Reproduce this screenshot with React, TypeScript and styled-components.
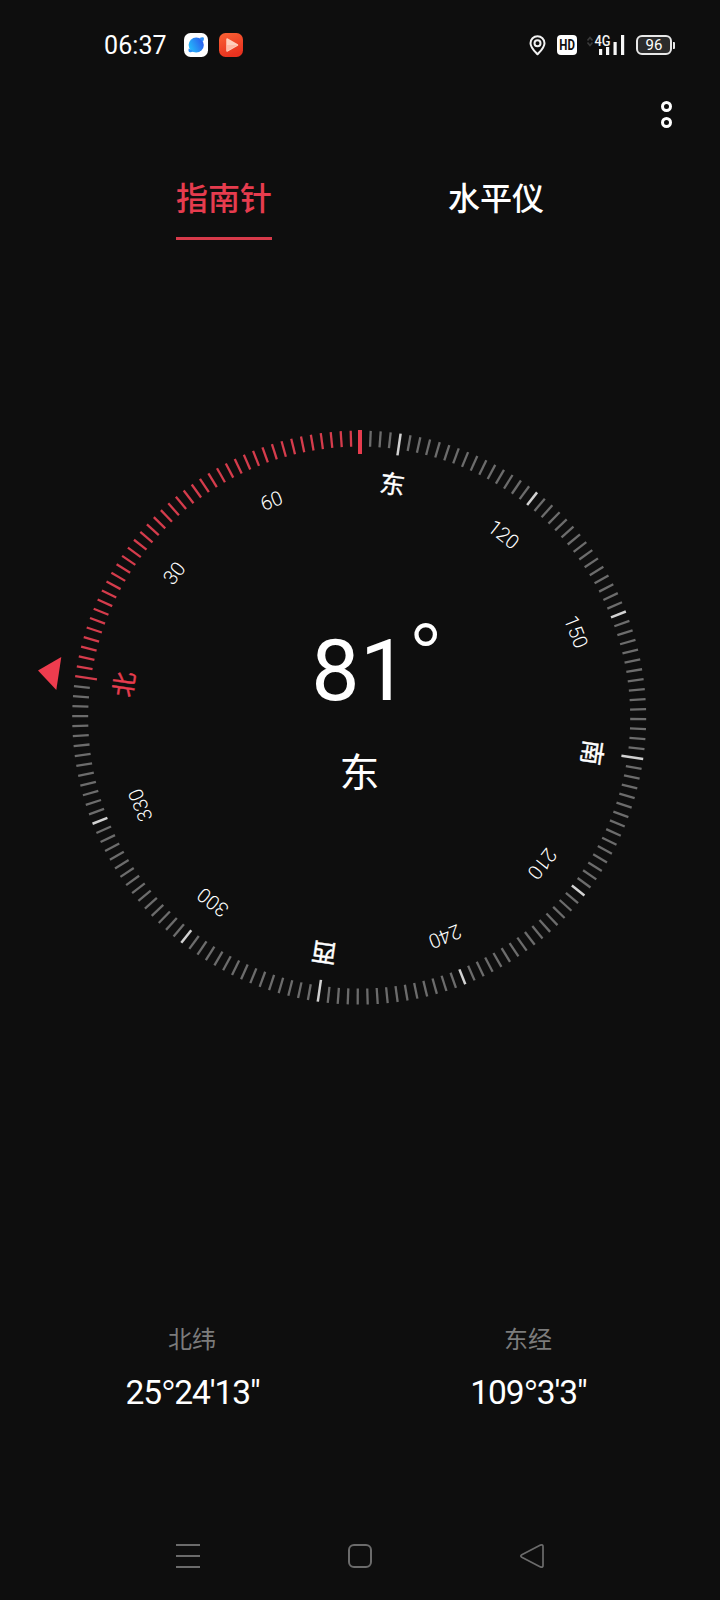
import React from "react";
import styled, { createGlobalStyle } from "styled-components";

const RED = "#e63c4e";
const DIGITS = `Roboto, "Noto Sans", "Noto Sans CJK SC", sans-serif`;
const HAN = `"Noto Sans CJK SC", "Noto Sans", sans-serif`;

const GlobalStyle = createGlobalStyle`
  * { box-sizing: border-box; }
  body { margin: 0; background: #0e0e0e; }
`;

const Screen = styled.main`
  width: 720px;
  height: 1600px;
  display: flex;
  flex-direction: column;
  background: #0e0e0e;
  color: #fff;
  font-family: ${DIGITS};
  overflow: hidden;
`;

const StatusBar = styled.header`
  height: 90px;
  flex: none;
  display: flex;
  align-items: center;
  padding: 0 45px 0 104px;
`;

const Clock = styled.time`
  width: 80px;
  padding-top: 1px;
  font-size: 25px;
  line-height: 30px;
  letter-spacing: 0.1px;
`;

const AppIcons = styled.div`
  display: flex;
  gap: 11px;
`;

const SystemIcons = styled.div`
  display: flex;
  align-items: center;
  margin-left: auto;
`;

const HdBadge = styled.svg.attrs({ width: 20, height: 20, viewBox: "0 0 20 20" })`
  margin: 0 9px 0 11px;
  overflow: visible;
  font-family: ${DIGITS};
  font-size: 14.5px;
  font-weight: 700;
`;

const Battery = styled.div`
  display: flex;
  align-items: center;
  margin-left: 11px;
`;

const BatteryBody = styled.span`
  width: 36px;
  height: 20px;
  border: 2px solid #e8e8e8;
  border-radius: 6px;
  background: #2b2b2b;
  display: flex;
  align-items: center;
  justify-content: center;
  font-size: 15px;
  line-height: 16px;
`;

const BatteryTip = styled.span`
  width: 2px;
  height: 7px;
  margin-left: 1px;
  background: #e8e8e8;
  border-radius: 0 1px 1px 0;
`;

const MenuRow = styled.div`
  height: 48px;
  display: flex;
  justify-content: flex-end;
  align-items: center;
  padding-right: 48.5px;
`;

const MenuButton = styled.button`
  border: 0;
  padding: 0;
  background: none;
  display: grid;
  gap: 5px;
`;

const Ring = styled.span`
  width: 11px;
  height: 11px;
  border: 3px solid #fff;
  border-radius: 50%;
`;

const Tabs = styled.nav`
  height: 102px;
  display: flex;
  justify-content: space-between;
  align-items: flex-end;
  padding: 0 176px;
`;

const Tab = styled.button<{ $active?: boolean }>`
  width: 96px;
  height: 70px;
  border: 0;
  border-bottom: 3px solid ${(p) => (p.$active ? "#d83a4a" : "transparent")};
  background: none;
  padding: 0 0 16px;
  font: 500 32px/48px ${HAN};
  white-space: nowrap;
  color: ${(p) => (p.$active ? RED : "#fff")};
`;

const Compass = styled.section`
  height: 640px;
  margin-top: 160px;
  display: grid;
  grid-template: 100% / 100%;
`;

const Dial = styled.svg`
  grid-area: 1 / 1;
  display: block;
`;

const Readout = styled.div`
  grid-area: 1 / 1;
  display: flex;
  flex-direction: column;
  align-items: center;
  padding-top: 221px;
`;

const Heading = styled.div`
  position: relative;
  font-size: 86px;
  line-height: 100px;
  letter-spacing: 0.5px;
`;

const DegreeSign = styled.span`
  position: absolute;
  left: 100%;
  top: -12px;
  font-size: 95px;
  font-weight: 300;
  margin-left: -1px;
`;

const Direction = styled.div`
  margin-top: 20px;
  padding-right: 1px;
  font: 400 40px/58px ${HAN};
`;

const Coordinates = styled.section`
  display: flex;
  margin-top: 280px;
  padding: 0 24px;
`;

const Coordinate = styled.div`
  flex: 1;
  display: flex;
  flex-direction: column;
  align-items: center;
`;

const CoordinateName = styled.span`
  font: 400 24px/36px ${HAN};
  color: #7c7c7c;
`;

const CoordinateValue = styled.span`
  margin-top: 17px;
  font-size: 33.5px;
  line-height: 40px;
  letter-spacing: -1.1px;
  padding-left: 1px;
`;

const CoordinateDegree = styled.span`
  font-size: 42px;
  font-weight: 300;
  line-height: 0;
  letter-spacing: -2px;
  margin-left: -0.5px;
  vertical-align: -6px;
`;

const NavigationBar = styled.footer`
  height: 88px;
  margin-top: auto;
  display: flex;
  justify-content: space-between;
  align-items: center;
  padding: 0 175px;
`;

const NavIcon = styled.svg.attrs({ width: 26, height: 26, viewBox: "0 0 26 26" })`
  fill: none;
  stroke: #6b6b6b;
  stroke-width: 2;
  stroke-linejoin: round;
`;

const NORTH = -81.7;
const HEADING = 82;
const CX = 359.2;
const CY = 317.6;
const LABEL_CX = 358.2;
const LABEL_CY = 318.5;
const CARDINALS: Record<number, string> = { 0: "北", 90: "东", 180: "南", 270: "西" };

function Ticks() {
  return (
    <>
      {Array.from({ length: 180 }, (_, i) => {
        const bearing = i * 2;
        const cardinal = bearing % 90 === 0;
        const major = bearing % 30 === 0;
        const travelled = bearing < HEADING;
        if (bearing === HEADING) return null;
        return (
          <line
            key={bearing}
            x1={CX}
            x2={CX}
            y1={CY - 287}
            y2={CY - (cardinal ? 265 : 271)}
            stroke={travelled ? "#d53c4c" : major ? "#d2d2d2" : "#6c6c6c"}
            strokeWidth={major && !travelled ? 2.5 : 2.3}
            transform={`rotate(${NORTH + bearing} ${CX} ${CY})`}
          />
        );
      })}
      <rect x={358} y={30} width={4} height={24} fill={RED} />
    </>
  );
}

function Labels() {
  return (
    <>
      {Array.from({ length: 12 }, (_, i) => {
        const bearing = i * 30;
        const name = CARDINALS[bearing];
        return (
          <text
            key={bearing}
            x={LABEL_CX}
            y={LABEL_CY - 227.5}
            textAnchor="middle"
            fontFamily={name ? HAN : DIGITS}
            fontSize={name ? 25 : 20}
            fontWeight={name ? 400 : 300}
            fill={bearing === 0 ? RED : "#fff"}
            stroke={name ? (bearing === 0 ? RED : "#fff") : "none"}
            strokeWidth={0.4}
            transform={`rotate(${NORTH + bearing} ${LABEL_CX} ${LABEL_CY})`}
          >
            {name ?? bearing}
          </text>
        );
      })}
    </>
  );
}

export default function App() {
  return (
    <Screen>
      <GlobalStyle />
      <StatusBar>
        <Clock>06:37</Clock>
        <AppIcons>
          <svg width="24" height="24" viewBox="0 0 24 24">
            <defs>
              <linearGradient id="planet" x1="0.1" y1="0.7" x2="0.9" y2="0.3">
                <stop offset="0" stopColor="#25b6fa" />
                <stop offset="1" stopColor="#2a62ee" />
              </linearGradient>
            </defs>
            <rect width="24" height="24" rx="6.5" fill="#fff" />
            <circle cx="12.2" cy="12" r="7.6" fill="url(#planet)" />
            <path d="M4.7 15.5c-.7 2.5 0 4.3 2.8 3.5l2.5-.8zM15.500 5c2.500-1 4.300-1 4.400.3.100 1-.3 2.300-1 3.500z" fill="#2c8df5" />
          </svg>
          <svg width="24" height="24" viewBox="0 0 24 24">
            <defs>
              <linearGradient id="player" x1="0" y1="0" x2="0.4" y2="1">
                <stop offset="0" stopColor="#fb6335" />
                <stop offset="1" stopColor="#e8321f" />
              </linearGradient>
            </defs>
            <rect width="24" height="24" rx="6.5" fill="url(#player)" />
            <path d="M8 6v12L18.500 12z" fill="#ffd0bd" stroke="#ffd0bd" strokeWidth="1.5" strokeLinejoin="round" />
            <path d="M8 12v6L18.500 12z" fill="#ffb9a5" />
          </svg>
        </AppIcons>
        <SystemIcons>
          <svg width="17" height="21" viewBox="0 0 17 21" fill="none" stroke="#f2f2f2">
            <path d="M8.500 19.300C6 16.500 1.500 12.700 1.500 8.200a7 7 0 0 1 14 0c0 4.500-4.500 8.300-7 11.100z" strokeWidth="2" strokeLinejoin="round" />
            <circle cx="8.5" cy="8.3" r="3" strokeWidth="2" />
          </svg>
          <HdBadge>
            <rect width="20" height="20" rx="4" fill="#fff" />
            <text x="2.3" y="15.2" fill="#0e0e0e" textLength="15.6" lengthAdjust="spacingAndGlyphs">HD</text>
          </HdBadge>
          <svg width="39" height="22" viewBox="0 0 39 22">
            <path d="M1.500 6.500l2.500-3 2.500 3M1.500 8.500l2.500 3 2.500-3" fill="none" stroke="#3a3a3a" strokeWidth="1.7" />
            <text x="8.5" y="11.5" fontFamily={DIGITS} fontSize="14.5" fontWeight="500" fill="#f2f2f2" textLength="16" lengthAdjust="spacingAndGlyphs">4G</text>
            <path d="M13 15h3.200v6H13zM20 13h3.200v8H20zM27.500 8h3.200v13h-3.200zM35 1h3.200v20H35z" fill="#f7f7f7" />
          </svg>
          <Battery>
            <BatteryBody>96</BatteryBody>
            <BatteryTip />
          </Battery>
        </SystemIcons>
      </StatusBar>

      <MenuRow>
        <MenuButton aria-label="更多">
          <Ring />
          <Ring />
        </MenuButton>
      </MenuRow>

      <Tabs>
        <Tab $active>指南针</Tab>
        <Tab>水平仪</Tab>
      </Tabs>

      <Compass>
        <Dial width="720" height="640" viewBox="0 0 720 640">
          <Ticks />
          <Labels />
          <path d="M38 270.500L61.300 257L56.300 290z" fill="#ee3c4e" />
        </Dial>
        <Readout>
          <Heading>
            81<DegreeSign>°</DegreeSign>
          </Heading>
          <Direction>东</Direction>
        </Readout>
      </Compass>

      <Coordinates>
        <Coordinate>
          <CoordinateName>北纬</CoordinateName>
          <CoordinateValue>
            25<CoordinateDegree>°</CoordinateDegree>24'13"
          </CoordinateValue>
        </Coordinate>
        <Coordinate>
          <CoordinateName>东经</CoordinateName>
          <CoordinateValue>
            109<CoordinateDegree>°</CoordinateDegree>3'3"
          </CoordinateValue>
        </Coordinate>
      </Coordinates>

      <NavigationBar>
        <NavIcon>
          <path d="M1 2h24M1 13h24M1 24h24" />
        </NavIcon>
        <NavIcon>
          <rect x="2" y="2" width="22" height="22" rx="5" />
        </NavIcon>
        <NavIcon>
          <path d="M2.800 11.700L21.500 2.100Q24 1.200 24 3.500V22.500Q24 24.800 21.500 23.900L2.800 14.300Q.8 13 2.800 11.700z" strokeWidth="1.7" />
        </NavIcon>
      </NavigationBar>
    </Screen>
  );
}
